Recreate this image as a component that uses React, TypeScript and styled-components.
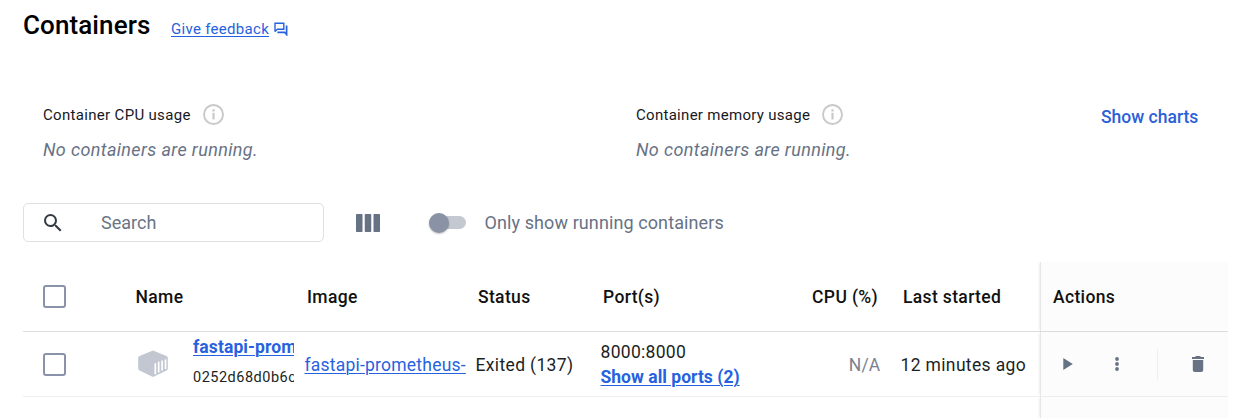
import React from "react";
import styled, { createGlobalStyle } from "styled-components";

const Global = createGlobalStyle`
  * { box-sizing: border-box; }
  body { margin: 0; background: #fff; font-family: Roboto, "Liberation Sans", sans-serif; color: #000; }
`;

const Page = styled.main`
  height: 418px;
  padding-left: 23px;
  padding-right: 29px;
  overflow: hidden;
  display: flex;
  flex-direction: column;
`;

const Text = styled.span<{ $size?: number; $track?: number; $weight?: number; $color?: string; $italic?: boolean }>`
  display: block;
  white-space: nowrap;
  font-size: ${(p) => p.$size ?? 17.5}px;
  letter-spacing: ${(p) => p.$track ?? 0}px;
  font-weight: ${(p) => p.$weight ?? 400};
  color: ${(p) => p.$color ?? "#1c1f24"};
  font-style: ${(p) => (p.$italic ? "italic" : "normal")};
  line-height: 24px;
`;

const Link = styled(Text)`
  color: #2762de;
  text-decoration: underline;
  text-decoration-thickness: 1px;
  text-underline-offset: 2px;
`;

const TitleBar = styled.header`
  height: 101px;
  padding-top: 10px;
  display: flex;
  align-items: flex-start;
`;

const Title = styled.h1`
  margin: 0;
  font-size: 26px;
  line-height: 30px;
  font-weight: 500;
  width: 148px;
  letter-spacing: 0.1px;
`;

const Feedback = styled.div`
  display: flex;
  align-items: center;
  gap: 5px;
  padding-top: 7px;
`;

const Stats = styled.section`
  height: 102px;
  padding-left: 20px;
  display: grid;
  grid-template-columns: 593px 465px auto;
  align-items: start;
`;

const StatLabel = styled.div`
  display: flex;
  align-items: center;
  height: 27px;
  gap: 12px;
`;

const StatValue = styled.div`
  padding-top: 10px;
`;

const ChartsButton = styled.div`
  padding-top: 4px;
`;

const Toolbar = styled.section`
  display: flex;
  align-items: center;
  height: 39px;
  flex-shrink: 0;
`;

const SearchBox = styled.div`
  width: 301px;
  height: 39px;
  border: 1px solid #dfe0e3;
  border-radius: 5px;
  display: flex;
  align-items: center;
  padding-left: 17px;
  gap: 36px;
  margin-right: 32.4px;
`;

const Switch = styled.div`
  width: 37px;
  height: 13px;
  margin-left: 48.6px;
  margin-right: 18.5px;
  border-radius: 7px;
  background: #c4c8d1;
  display: flex;
  align-items: center;
`;

const Knob = styled.div`
  width: 20px;
  height: 20px;
  border-radius: 50%;
  background: #8993a5;
  box-shadow: 0 1px 2px rgba(0, 0, 0, 0.25);
  flex-shrink: 0;
`;

const Table = styled.section`
  margin-top: 20px;
  height: 156px;
  display: flex;
  flex-direction: column;
`;

const Row = styled.div<{ $height: number; $line?: string }>`
  display: grid;
  grid-template-columns: 112px 160px 171px 125px 170px 130px 149px 188px;
  height: ${(p) => p.$height}px;
  flex-shrink: 0;
  border-bottom: ${(p) => (p.$line ? `1px solid ${p.$line}` : "none")};
`;

const Cell = styled.div<{ $pad?: number; $right?: number; $top?: number }>`
  display: flex;
  align-items: center;
  min-width: 0;
  overflow: hidden;
  padding-top: ${(p) => p.$top ?? 0}px;
  padding-left: ${(p) => p.$pad ?? 10}px;
  padding-right: ${(p) => p.$right ?? 0}px;
  justify-content: ${(p) => (p.$right ? "flex-end" : "flex-start")};
`;

const StackCell = styled(Cell)`
  flex-direction: column;
  align-items: flex-start;
  gap: 1px;
`;

const NameCell = styled(Cell)`
  align-items: flex-start;
`;

const NameText = styled.div`
  width: 101px;
  overflow: hidden;
  padding-top: 3px;
  display: flex;
  flex-direction: column;
  gap: 7px;
`;

const ActionCell = styled.div`
  display: flex;
  align-items: center;
  padding-left: 12px;
  background: #fcfcfc;
  border-left: 1px solid #e6e6e7;
  box-shadow: -2px 0 2px -1px rgba(0, 0, 0, 0.08);
`;

const Checkbox = styled.div`
  width: 23px;
  height: 23px;
  border: 2px solid #8a92a9;
  border-radius: 3px;
`;

const CubeSlot = styled.div`
  width: 58px;
  padding-top: 17px;
  flex-shrink: 0;
`;

const Divider = styled.div`
  width: 1px;
  height: 31px;
  margin: 0 34px 0 37px;
  background: #eeeff1;
`;

const Icon = styled.svg`
  display: block;
  flex-shrink: 0;
`;

const MoreIcon = styled(Icon)`
  margin-left: 31px;
`;

const InfoIcon = () => (
  <Icon width="21" height="21" viewBox="0 0 21 21" fill="none">
    <circle cx="10.5" cy="10.5" r="9.5" stroke="#c9c9c9" strokeWidth="1.9" />
    <path d="M10.5 8.8v6.7M10.5 5.2v2.2" stroke="#c9c9c9" strokeWidth="2.2" />
  </Icon>
);

const Stat = ({ label, track }: { label: string; track: number }) => (
  <div>
    <StatLabel>
      <Text $size={15} $track={track} $color="#17191e">{label}</Text>
      <InfoIcon />
    </StatLabel>
    <StatValue>
      <Text $size={18} $track={0.37} $italic $color="#677285">No containers are running.</Text>
    </StatValue>
  </div>
);

const Head = ({ children }: { children: React.ReactNode }) => (
  <Text $track={0.35} $weight={500} $color="#111">{children}</Text>
);

export default function App() {
  return (
    <>
      <Global />
      <Page>
        <TitleBar>
          <Title>Containers</Title>
          <Feedback>
            <Link as="a" $size={15} $track={0.3}>Give feedback</Link>
            <Icon width="14" height="14" viewBox="0 0 14 14" fill="none" stroke="#2762de" strokeWidth="1.4">
              <path d="M1 9.8V1.2h8.8v6H3.4L1 9.5" />
              <path d="M12.6 3.5v9L10.6 10.3H3.4" strokeWidth="1.7" />
            </Icon>
          </Feedback>
        </TitleBar>

        <Stats>
          <Stat label="Container CPU usage" track={0.32} />
          <Stat label="Container memory usage" track={0.29} />
          <ChartsButton>
            <Text $weight={500} $color="#2c60d6">Show charts</Text>
          </ChartsButton>
        </Stats>

        <Toolbar>
          <SearchBox>
            <Icon width="24" height="24" viewBox="0 0 24 24" fill="#343a42">
              <path d="M15.5 14h-.79l-.28-.27A6.47 6.47 0 0 0 16 9.5 6.5 6.5 0 1 0 9.5 16c1.61 0 3.09-.59 4.23-1.57l.27.28v.79l5 4.99L20.49 19l-4.99-5zm-6 0C7.01 14 5 11.99 5 9.5S7.01 5 9.5 5 14 7.01 14 9.5 11.99 14 9.5 14z" />
            </Icon>
            <Text $size={18} $color="#6a7585">Search</Text>
          </SearchBox>
          <Icon width="24" height="18" viewBox="0 0 24 18" fill="#677285">
            <rect width="6.5" height="18" rx="0.8" />
            <rect x="8.75" width="6.5" height="18" rx="0.8" />
            <rect x="17.5" width="6.5" height="18" rx="0.8" />
          </Icon>
          <Switch><Knob /></Switch>
          <Text $size={18} $track={0.1} $color="#677285">Only show running containers</Text>
        </Toolbar>

        <Table>
          <Row $height={70} $line="#dcdddf">
            <Cell $pad={20}><Checkbox /></Cell>
            <Cell $pad={0.5}><Head>Name</Head></Cell>
            <Cell $pad={12}><Head>Image</Head></Cell>
            <Cell $pad={12}><Head>Status</Head></Cell>
            <Cell $pad={12}><Head>Port(s)</Head></Cell>
            <Cell $right={13}><Head>CPU (%)</Head></Cell>
            <Cell $pad={12}><Head>Last started</Head></Cell>
            <ActionCell><Head>Actions</Head></ActionCell>
          </Row>
          <Row $height={65} $line="#efeff1">
            <Cell $pad={20}><Checkbox /></Cell>
            <NameCell $pad={0}>
              <CubeSlot>
                <Icon width="36" height="30" viewBox="0 0 36 30">
                  <path d="M18 1.5 31.5 7q1.3.6 1.3 2v10.4q0 1.4-1.3 2L18 28 4.5 21.4q-1.3-.6-1.3-2V9q0-1.4 1.3-2z" fill="#c3c7d2" />
                  <path d="M20.3 14.2v11M23.7 12.8v10.6M27.1 11.6v10M30.5 10.4v9.6" stroke="#fff" strokeWidth="1.7" />
                </Icon>
              </CubeSlot>
              <NameText>
                <Link as="a" $weight={700} $track={0.1}>fastapi-prometheus</Link>
                <Text $size={14.5} $track={0.5}>0252d68d0b6c</Text>
              </NameText>
            </NameCell>
            <Cell $pad={9.5} $top={1}><Link as="a" $track={0.22}>fastapi-prometheus-</Link></Cell>
            <Cell $pad={9.5} $top={1}><Text $track={0.35}>Exited (137)</Text></Cell>
            <StackCell $pad={9.5} $top={8}>
              <Text $track={0.3}>8000:8000</Text>
              <Link as="a" $weight={700} $track={0.02}>Show all ports (2)</Link>
            </StackCell>
            <Cell $right={10.5} $top={1}><Text $track={0.2} $color="#7a8291">N/A</Text></Cell>
            <Cell $pad={9.5} $top={1}><Text $track={0.35}>12 minutes ago</Text></Cell>
            <ActionCell>
              <Icon width="30" height="24" viewBox="0 0 30 24" fill="#677285"><path d="M10.3 6v12l9.5-6z" /></Icon>
              <MoreIcon width="6" height="16" viewBox="0 0 6 16" fill="#677285">
                <circle cx="3" cy="3" r="1.9" /><circle cx="3" cy="8" r="1.9" /><circle cx="3" cy="13" r="1.9" />
              </MoreIcon>
              <Divider />
              <Icon width="12" height="16" viewBox="0 0 12 16" fill="#677285">
                <path d="M0 1h3l1-1h4l1 1h3v2H0zM.8 4h10.4v10q0 2-2 2H2.8q-2 0-2-2z" />
              </Icon>
            </ActionCell>
          </Row>
          <Row $height={21}>
            <Cell /><Cell /><Cell /><Cell /><Cell /><Cell /><Cell /><ActionCell />
          </Row>
        </Table>
      </Page>
    </>
  );
}
